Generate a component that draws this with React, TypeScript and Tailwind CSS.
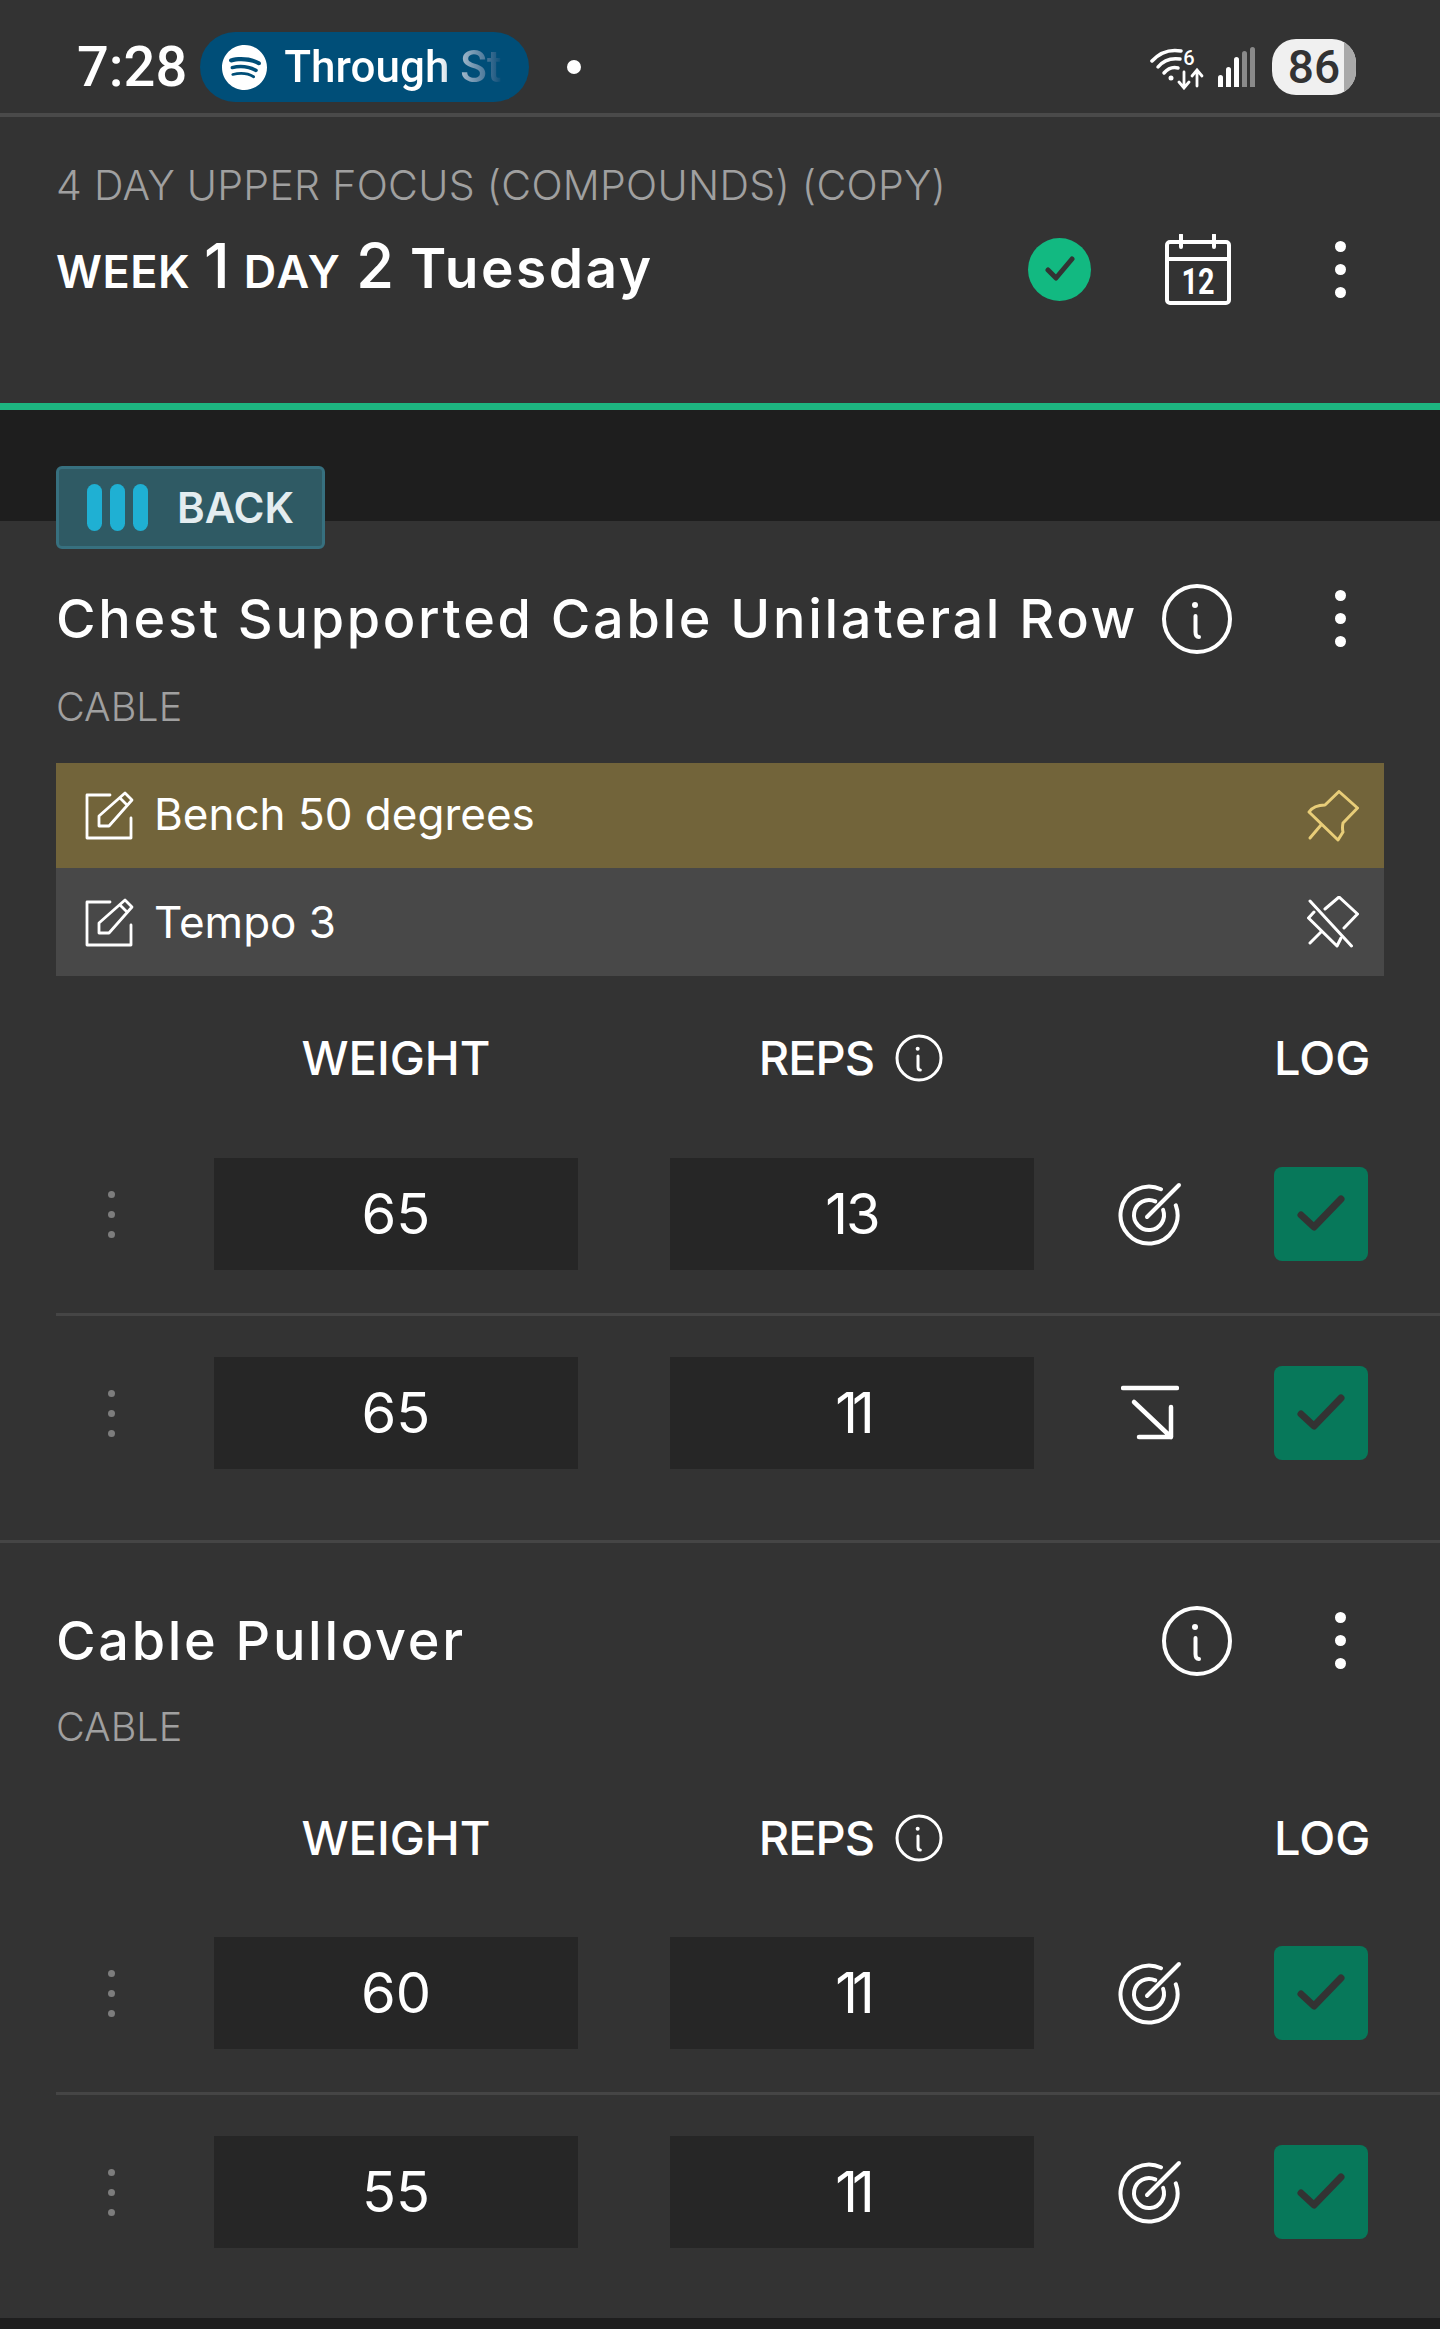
import { SiSpotify } from "react-icons/si";

const Dots = () => (
  <div className="flex flex-col items-center gap-[12px]">
    <span className="h-[11px] w-[11px] rounded-full bg-white" />
    <span className="h-[11px] w-[11px] rounded-full bg-white" />
    <span className="h-[11px] w-[11px] rounded-full bg-white" />
  </div>
);

const DragDots = () => (
  <div className="flex flex-col items-center gap-[13px]">
    <span className="h-[7px] w-[7px] rounded-full bg-[#7d7d7d]" />
    <span className="h-[7px] w-[7px] rounded-full bg-[#7d7d7d]" />
    <span className="h-[7px] w-[7px] rounded-full bg-[#7d7d7d]" />
  </div>
);

const InfoIcon = ({ size, sw }: { size: number; sw: number }) => (
  <svg width={size} height={size} viewBox="0 0 72 72" fill="none" stroke="white" strokeWidth={sw} strokeLinecap="round">
    <circle cx="36" cy="36" r="33" />
    <circle cx="34" cy="22" r="3" fill="white" stroke="none" />
    <path d="M34.500 33V49Q34.500 54 38 54" />
  </svg>
);

const TargetIcon = () => (
  <svg width="64" height="64" viewBox="0 0 64 64" fill="none" stroke="white" strokeWidth="4" strokeLinecap="round">
    <path d="M43 7.200A28.500 28.500 0 1 0 57.800 23.300" />
    <path d="M37.300 19.400A15 15 0 1 0 45.100 27.900" />
    <path d="M29 35L61 3" />
  </svg>
);

const DropIcon = () => (
  <svg width="58" height="56" viewBox="0 0 58 56" fill="none" stroke="white" strokeWidth="4.500" strokeLinecap="round" strokeLinejoin="round">
    <path d="M2 3H56" />
    <path d="M13 17L50 52M50 22V52H18" />
  </svg>
);

const EditIcon = () => (
  <svg width="49" height="49" viewBox="0 0 49 49" fill="none" stroke="white" strokeWidth="2.800" strokeLinecap="round" strokeLinejoin="round">
    <path d="M25 4H2V47H46V27" />
    <path d="M14 35V25L40 2L47 9L24 35ZM35 7L42 14" />
  </svg>
);

const PinIcon = () => (
  <svg width="52" height="52" viewBox="0 0 52 52" fill="none" stroke="#e8cd78" strokeWidth="3" strokeLinecap="round" strokeLinejoin="round">
    <path d="M32 1.500L50.500 18L36 33Q35 38 36 42L31 50L2 22Q7 15 18 15Z" />
    <path d="M14 35L3 48" />
  </svg>
);

const UnpinIcon = () => (
  <svg width="52" height="52" viewBox="0 0 52 52" fill="none" stroke="white" strokeWidth="3" strokeLinecap="round" strokeLinejoin="round">
    <path d="M18 13L32 1L50.500 18L37 32" />
    <path d="M7 16L1.500 22L30 50L34 42" />
    <path d="M14 36L3 47M3 5L44.500 50" />
  </svg>
);

const CheckBox = () => (
  <div className="flex h-[94px] w-[94px] items-center justify-center rounded-[8px] bg-[#07785a]">
    <svg width="48" height="38" viewBox="0 0 48 38" fill="none" stroke="#333333" strokeWidth="7" strokeLinecap="round" strokeLinejoin="round">
      <path d="M4 20L17 32L44 4" />
    </svg>
  </div>
);

const WifiIcon = () => (
  <svg width="56" height="46" viewBox="0 -4 56 46" fill="none" stroke="white" strokeWidth="3.500" strokeLinecap="round">
    <path d="M2 13Q14 0 31 3" />
    <path d="M8 19Q16 9 30 11" />
    <path d="M14 25Q20 18 28 20" />
    <circle cx="21" cy="30" r="2.500" fill="white" stroke="none" />
    <text x="39" y="17" fill="white" stroke="none" textAnchor="middle" fontSize="20" fontWeight="500" fontFamily="Roboto, sans-serif">6</text>
    <path d="M34 24V39M29 34L34 40L39 34" strokeWidth="2.800" />
    <path d="M47 38V23M42 28L47 22L52 28" strokeWidth="2.800" />
  </svg>
);

const SignalIcon = () => (
  <div className="flex h-[40px] items-end gap-[3px]">
    <span className="h-[12px] w-[5px] rounded-t-full bg-white" />
    <span className="h-[20px] w-[5px] rounded-t-full bg-white" />
    <span className="h-[30px] w-[5px] rounded-t-full bg-white" />
    <span className="h-[36px] w-[5px] rounded-t-full bg-[#8a8a8a]" />
    <span className="h-[40px] w-[5px] rounded-t-full bg-[#8a8a8a]" />
  </div>
);

const SetRow = ({ weight, reps, drop, first }: { weight: string; reps: string; drop?: boolean; first?: boolean }) => (
  <div className={`ml-14 flex items-center ${first ? "h-[198px]" : "h-[197px] border-t-[3px] border-[#454545]"}`}>
    <div className="flex w-[110px] justify-center">
      <DragDots />
    </div>
    <div className="ml-[48px] flex h-[112px] w-[364px] items-center justify-center bg-[#262626] text-[56px] text-white">{weight}</div>
    <div className={`ml-[92px] flex h-[112px] w-[364px] items-center justify-center bg-[#262626] text-[56px] text-white ${reps === "11" ? "tracking-[-6px]" : "tracking-[-2px]"}`}>{reps}</div>
    <div className="flex w-[232px] justify-center">{drop ? <DropIcon /> : <TargetIcon />}</div>
    <div className="ml-2">
      <CheckBox />
    </div>
  </div>
);

const TableHead = () => (
  <div className="ml-14 flex h-[66px] items-center text-[47px] font-medium text-white">
    <div className="w-[110px]" />
    <div className="ml-[48px] w-[364px] text-center">WEIGHT</div>
    <div className="ml-[92px] flex w-[364px] items-center justify-center gap-[21px] pr-[2px] tracking-[-1px]">
      REPS
      <InfoIcon size={48} sw={4.500} />
    </div>
    <div className="ml-[240px] w-[96px] whitespace-nowrap text-center">LOG</div>
  </div>
);

const Note = ({ text, pinned }: { text: string; pinned?: boolean }) => (
  <div className={`flex items-center justify-between pl-[29px] pr-[25px] ${pinned ? "h-[105px] bg-[#72643a]" : "h-[108px] bg-[#484848]"}`}>
    <div className="flex items-center gap-[20px] text-[44px] text-white">
      <EditIcon />
      <span className={pinned ? "pb-[3px]" : ""}>{text}</span>
    </div>
    {pinned ? <PinIcon /> : <UnpinIcon />}
  </div>
);

const ExerciseTitle = ({ name }: { name: string }) => (
  <div className="flex h-[71px] items-center px-14">
    <div className="text-[54px] font-medium leading-[71px] tracking-[2.700px] whitespace-nowrap text-white">{name}</div>
    <div className="ml-auto flex items-center">
      <InfoIcon size={72} sw={4} />
      <div className="ml-[102px] mr-[38px]">
        <Dots />
      </div>
    </div>
  </div>
);

export default function App() {
  return (
    <div className="flex h-[2329px] w-[1440px] flex-col overflow-hidden bg-[#333333] font-['Inter',sans-serif]">
      <div className="flex h-[113px] items-center pl-[77px] pr-[84px] pt-[21px] font-['Roboto',sans-serif]">
        <span className="text-[56px] font-medium text-white">7:28</span>
        <div className="ml-[13px] flex h-[70px] w-[329px] items-center gap-[17px] rounded-full bg-[#004e78] pl-[22px]">
          <SiSpotify className="text-[45px] text-white" />
          <span className="bg-linear-to-r from-white from-70% to-[#004e78] to-100% bg-clip-text text-[44px] font-medium text-transparent">Through St</span>
        </div>
        <span className="ml-[38px] h-[14px] w-[14px] rounded-full bg-white" />
        <div className="ml-auto flex items-center gap-[12px]">
          <WifiIcon />
          <SignalIcon />
          <div className="relative ml-[5px] flex h-[56px] w-[84px] items-center justify-center overflow-hidden rounded-[24px] bg-[#f0f0f0] text-[46px] font-medium text-[#333333]">
            <span className="absolute right-0 top-0 h-full w-[12px] bg-[#a9a9a9]" />
            <span className="relative">86</span>
          </div>
        </div>
      </div>
      <div className="h-[4px] bg-[#4a4a4a]" />

      <div className="flex h-[286px] flex-col px-14">
        <div className="mt-[38px] text-[41px] font-light leading-[60px] tracking-[0.300px] text-[#a0a0a0]">4 DAY UPPER FOCUS (COMPOUNDS) (COPY)</div>
        <div className="mt-[16px] flex items-center">
          <div className="flex items-baseline font-semibold leading-[70px] text-white">
            <span className="text-[45px] tracking-[0.500px]">WEEK</span>
            <span className="ml-[14px] text-[62px] font-medium">1</span>
            <span className="ml-[14px] text-[45px] tracking-[2px]">DAY</span>
            <span className="ml-[14px] text-[62px] font-medium">2</span>
            <span className="ml-[16px] text-[55px] tracking-[2.500px]">Tuesday</span>
          </div>
          <div className="ml-auto flex h-[71px] items-center">
            <div className="flex h-[63px] w-[63px] items-center justify-center rounded-full bg-[#12b981]">
              <svg width="30" height="26" viewBox="0 0 30 26" fill="none" stroke="#333333" strokeWidth="5" strokeLinecap="round" strokeLinejoin="round">
                <path d="M3 14L11 22L27 3" />
              </svg>
            </div>
            <svg className="ml-[74px]" width="66" height="71" viewBox="0 0 66 71" fill="none" stroke="white" strokeWidth="4" strokeLinecap="round">
              <rect x="2" y="8" width="62" height="61" rx="3" />
              <path d="M16 1V13M49 1V13M2 25H64" />
              <text x="33" y="60" fill="white" stroke="none" textAnchor="middle" fontSize="36" fontWeight="700" fontFamily="Roboto, sans-serif" textLength={33} lengthAdjust="spacingAndGlyphs">12</text>
            </svg>
            <div className="ml-[104px] mr-[38px]">
              <Dots />
            </div>
          </div>
        </div>
      </div>

      <div className="h-[7px] bg-[#1db580]" />
      <div className="h-[111px] bg-[#1e1e1e]" />

      <div className="relative -mt-[55px] ml-14 flex h-[83px] w-[269px] items-center rounded-[6px] border-[3px] border-[#37707f] bg-[#2f5a64] pl-[28px]">
        <div className="flex gap-[8px]">
          <span className="h-[47px] w-[15px] rounded-full bg-[#1fb0d3]" />
          <span className="h-[47px] w-[15px] rounded-full bg-[#1fb0d3]" />
          <span className="h-[47px] w-[15px] rounded-full bg-[#1fb0d3]" />
        </div>
        <span className="ml-[29px] text-[42px] font-semibold text-[#e4edf0]">BACK</span>
      </div>

      <div className="mt-[34px]">
        <ExerciseTitle name="Chest Supported Cable Unilateral Row" />
      </div>
      <div className="mt-[28px] px-14 text-[39.500px] font-light leading-[50px] text-[#a0a0a0]">CABLE</div>

      <div className="mx-14 mt-[31px]">
        <Note text="Bench 50 degrees" pinned />
        <Note text="Tempo 3" />
      </div>

      <div className="mt-[49px]">
        <TableHead />
      </div>
      <div className="mt-[24px]">
        <SetRow weight="65" reps="13" first />
      </div>
      <SetRow weight="65" reps="11" drop />
      <div className="mt-[30px] h-[3px] bg-[#454545]" />

      <div className="mt-[62px]">
        <ExerciseTitle name="Cable Pullover" />
      </div>
      <div className="mt-[26px] px-14 text-[39.500px] font-light leading-[50px] text-[#a0a0a0]">CABLE</div>

      <div className="mt-[53px]">
        <TableHead />
      </div>
      <div className="mt-[23px]">
        <SetRow weight="60" reps="11" first />
      </div>
      <SetRow weight="55" reps="11" />
      <div className="mt-[29px] flex-1 bg-[#1e1e1e]" />
    </div>
  );
}
